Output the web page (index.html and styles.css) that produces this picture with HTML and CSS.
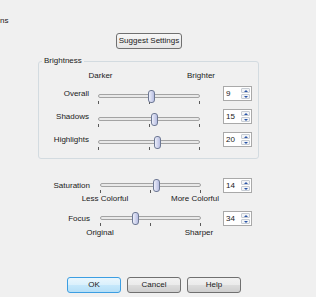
FILE: index.html
```html
<!DOCTYPE html>
<html lang="en">
<head>
  <meta charset="UTF-8" />
  <meta name="viewport" content="width=device-width, initial-scale=1.0" />
  <title>Adjust Options</title>
  <link rel="stylesheet" href="styles.css">
</head>
<body>

  <div class="caption">ns</div>

  <div class="suggest-row">
    <button class="btn suggest">Suggest Settings</button>
  </div>

  <!-- Brightness group -->
  <fieldset class="group">
    <legend>Brightness</legend>

    <div class="ends ends-top">
      <span class="end darker">Darker</span>
      <span class="end brighter">Brighter</span>
    </div>

    <div class="row">
      <span class="lbl">Overall</span>
      <div class="slider">
        <div class="track"></div>
        <div class="ticks"><i></i><i></i><i></i></div>
        <div class="thumb" style="left: 50px"></div>
      </div>
      <div class="spin"><span class="val">9</span><span class="arrows"><span class="arr up"></span><span class="arr down"></span></span></div>
    </div>

    <div class="row">
      <span class="lbl">Shadows</span>
      <div class="slider">
        <div class="track"></div>
        <div class="ticks"><i></i><i></i><i></i></div>
        <div class="thumb" style="left: 53px"></div>
      </div>
      <div class="spin"><span class="val">15</span><span class="arrows"><span class="arr up"></span><span class="arr down"></span></span></div>
    </div>

    <div class="row">
      <span class="lbl">Highlights</span>
      <div class="slider">
        <div class="track"></div>
        <div class="ticks"><i></i><i></i><i></i></div>
        <div class="thumb" style="left: 56px"></div>
      </div>
      <div class="spin"><span class="val">20</span><span class="arrows"><span class="arr up"></span><span class="arr down"></span></span></div>
    </div>
  </fieldset>

  <!-- Saturation / Focus -->
  <div class="row row-lower sat">
    <span class="lbl">Saturation</span>
    <div class="slider">
      <div class="track"></div>
      <div class="ticks"><i></i><i></i><i></i></div>
      <div class="thumb" style="left: 53px"></div>
    </div>
    <div class="spin"><span class="val">14</span><span class="arrows"><span class="arr up"></span><span class="arr down"></span></span></div>
  </div>
  <div class="ends ends-sat">
    <span class="end less">Less Colorful</span>
    <span class="end more">More Colorful</span>
  </div>

  <div class="row row-lower focus">
    <span class="lbl">Focus</span>
    <div class="slider">
      <div class="track"></div>
      <div class="ticks"><i></i><i></i><i></i></div>
      <div class="thumb" style="left: 32px"></div>
    </div>
    <div class="spin"><span class="val">34</span><span class="arrows"><span class="arr up"></span><span class="arr down"></span></span></div>
  </div>
  <div class="ends ends-focus">
    <span class="end original">Original</span>
    <span class="end sharper">Sharper</span>
  </div>

  <div class="buttons">
    <button class="btn default">OK</button>
    <button class="btn">Cancel</button>
    <button class="btn">Help</button>
  </div>

</body>
</html>
```

FILE: styles.css
```css
* {
  box-sizing: border-box;
}
body {
  margin: 0;
  width: 316px;
  height: 297px;
  overflow: hidden;
  background: #f0f0f0;
  color: #1a1a1a;
  font-family: "Liberation Sans", Arial, sans-serif;
  font-size: 8px;
  line-height: 10px;
}
.caption {
  margin-top: 16px;
  height: 10px;
}
.suggest-row {
  margin-top: 7px;
  padding-left: 116px;
  height: 16px;
}
.btn {
  font: inherit;
  color: inherit;
  height: 16px;
  padding: 0;
  line-height: 14px;
  border: 1px solid #707070;
  border-radius: 3px;
  background: linear-gradient(#f2f2f2 0%, #ebebeb 50%, #dddddd 50%, #cfcfcf 100%);
}
.suggest {
  width: 66px;
  background: linear-gradient(#f7f7f7, #e6e6e6);
}
.btn.default {
  border-color: #3c9ee2;
  background: linear-gradient(#eaf6fd 0%, #d9f0fc 50%, #c6e8fb 50%, #b6dff7 100%);
}

/* group box */
.group {
  margin: 7px 0 0 38px;
  width: 221px;
  min-width: 0;
  padding: 5px 0 8px 0;
  border: 1px solid #d3dbe0;
  border-radius: 3px;
}
.group legend {
  margin-left: 3px;
  padding: 0 2px;
  line-height: 10px;
}

/* end captions */
.ends {
  display: flex;
  height: 10px;
}
.end {
  text-align: center;
  white-space: nowrap;
}
.darker { width: 41px; margin-left: 41px; }
.brighter { width: 40px; margin-left: 60px; }
.ends-sat { margin-top: 1px; }
.less { width: 60px; margin-left: 75px; }
.more { width: 60px; margin-left: 30px; }
.ends-focus { margin-top: 2px; }
.original { width: 60px; margin-left: 70px; }
.sharper { width: 60px; margin-left: 39px; }

/* slider rows */
.row {
  display: flex;
  align-items: flex-start;
  margin-top: 5px;
}
.lbl {
  width: 50px;
  text-align: right;
  line-height: 15px;
  white-space: nowrap;
}
.slider {
  position: relative;
  width: 102px;
  height: 15px;
  margin-left: 9px;
  margin-top: 3px;
}
.spin {
  display: flex;
  width: 29px;
  height: 15px;
  margin-left: 23px;
  padding: 1px;
  border: 1px solid #a9a9a9;
  background: #fff;
}
.row-lower {
  padding-left: 40px;
}
.row-lower .slider {
  width: 101px;
  margin-left: 10px;
  margin-top: 0;
}
.row-lower .spin {
  margin-left: 22px;
}
.sat { margin-top: 19px; }
.focus { margin-top: 7px; }

.track {
  margin-top: 5px;
  height: 4px;
  border: 1px solid #a3a3a3;
  border-radius: 2px;
  background: #e9e9e9;
}
.ticks {
  display: flex;
  justify-content: space-between;
  margin-top: 3px;
  height: 3px;
}
.ticks i {
  width: 1px;
  background: #5a5a5a;
}
.thumb {
  position: absolute;
  top: 1px;
  width: 7px;
  height: 13px;
  border: 1px solid #6d7894;
  border-radius: 3px;
  background: linear-gradient(90deg, #eceefa, #b8bee2);
}

/* spin box */
.val {
  flex: 1;
  padding-left: 1px;
  line-height: 11px;
}
.arrows {
  width: 9px;
  display: flex;
  flex-direction: column;
  gap: 1px;
}
.arr {
  flex: 1;
  display: flex;
  align-items: center;
  justify-content: center;
  border: 1px solid #c6ccd4;
  border-radius: 1px;
  background: #f2f4f6;
}
.arr::after {
  content: "";
  border-left: 2px solid transparent;
  border-right: 2px solid transparent;
}
.up::after {
  border-bottom: 2px solid #2a55a8;
}
.down::after {
  border-top: 2px solid #2a55a8;
}

/* bottom buttons */
.buttons {
  display: flex;
  gap: 6px;
  margin-top: 39px;
  padding-left: 67px;
}
.buttons .btn {
  width: 54px;
}
```
